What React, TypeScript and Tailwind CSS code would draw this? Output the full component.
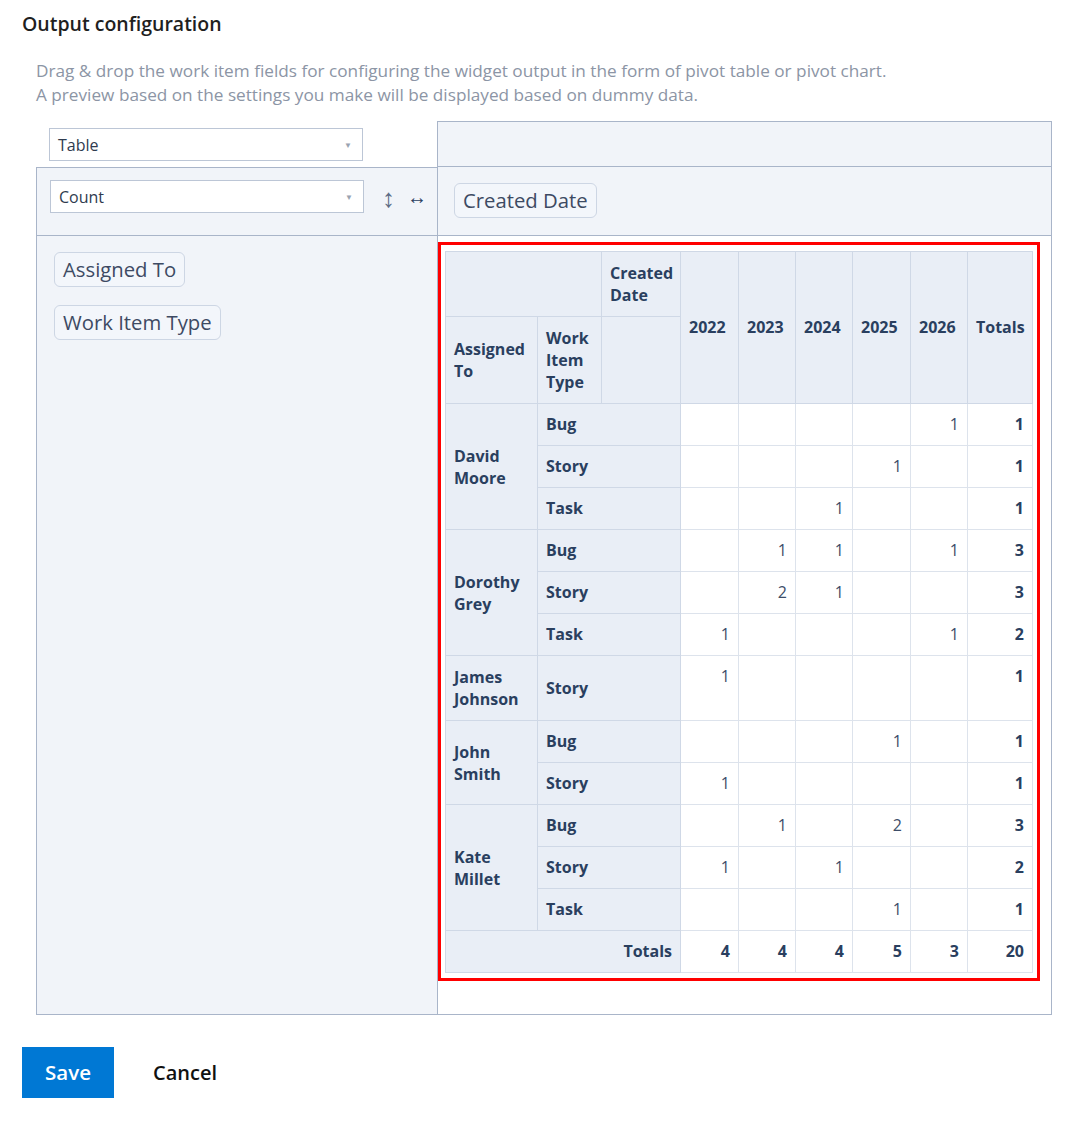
import React from "react";

const years = ["2022", "2023", "2024", "2025", "2026"];

type Row = { type: string; vals: (number | null)[]; total: number };
type Group = { name: string[]; rows: Row[] };

const groups: Group[] = [
  {
    name: ["David", "Moore"],
    rows: [
      { type: "Bug", vals: [null, null, null, null, 1], total: 1 },
      { type: "Story", vals: [null, null, null, 1, null], total: 1 },
      { type: "Task", vals: [null, null, 1, null, null], total: 1 },
    ],
  },
  {
    name: ["Dorothy", "Grey"],
    rows: [
      { type: "Bug", vals: [null, 1, 1, null, 1], total: 3 },
      { type: "Story", vals: [null, 2, 1, null, null], total: 3 },
      { type: "Task", vals: [1, null, null, null, 1], total: 2 },
    ],
  },
  {
    name: ["James", "Johnson"],
    rows: [{ type: "Story", vals: [1, null, null, null, null], total: 1 }],
  },
  {
    name: ["John", "Smith"],
    rows: [
      { type: "Bug", vals: [null, null, null, 1, null], total: 1 },
      { type: "Story", vals: [1, null, null, null, null], total: 1 },
    ],
  },
  {
    name: ["Kate", "Millet"],
    rows: [
      { type: "Bug", vals: [null, 1, null, 2, null], total: 3 },
      { type: "Story", vals: [1, null, 1, null, null], total: 2 },
      { type: "Task", vals: [null, null, null, 1, null], total: 1 },
    ],
  },
];

const colTotals = [4, 4, 4, 5, 3];

const th =
  "bg-[#e9eef6] border border-[#cfd8e6] px-[8px] py-[10px] font-bold text-left text-[#2a3f5f] leading-[21px]";
const td =
  "bg-white border border-[#dde3ec] px-[8px] py-[10px] text-right align-top text-[#3d4d68] leading-[21px]";

function Select({ label }: { label: string }) {
  return (
    <div className="w-[314px] h-[33px] bg-white border border-[#bcc6d6] flex items-center justify-between pl-[8px] pr-[10px]">
      <span className="text-[16px] text-[#2f3b4f]">{label}</span>
      <span className="text-[8px] text-[#9aa3b1]">▼</span>
    </div>
  );
}

function Pill({ label }: { label: string }) {
  return (
    <div className="inline-flex items-center h-[35px] px-[8px] border border-[#cdd6e4] rounded-[6px] bg-[#f3f6fb] text-[20.3px] text-[#3d4a63]">
      {label}
    </div>
  );
}

export default function App() {
  return (
    <div
      className="min-h-[1143px] bg-white w-[1072px]"
      style={{ fontFamily: '"Open Sans", "Noto Sans", sans-serif' }}
    >
      <div className="w-[1052px] bg-white pl-[22px] pt-[10px] pb-[46px]">
        <h2 className="text-[19.5px] leading-[28px] font-semibold text-[#1f1f1f]">
          Output configuration
        </h2>
        <div className="mt-[21px] pl-[14px] text-[17.2px] leading-[24px] text-[#8c95a5]">
          <p>
            Drag &amp; drop the work item fields for configuring the widget output in the form of pivot table or pivot chart.
          </p>
          <p>A preview based on the settings you make will be displayed based on dummy data.</p>
        </div>

        <div className="mt-[14px] ml-[14px] w-[1016px] grid grid-cols-[401px_615px] grid-rows-[46px_68px_auto]">
          {/* row 1 */}
          <div className="bg-white pl-[13px] pt-[7px]">
            <Select label="Table" />
          </div>
          <div className="bg-[#f1f4f9] border border-[#a9b5c9]" />
          {/* row 2 */}
          <div className="bg-[#f1f4f9] border-l border-t border-[#a9b5c9] pl-[13px] pt-[12px] flex items-start">
            <Select label="Count" />
            <div className="flex items-center h-[33px] ml-[18px] gap-[12px]">
              <span className="text-[26px] text-[#5d6c86] leading-none">↕</span>
              <span className="text-[20px] text-[#2a3f5f] leading-none">↔</span>
            </div>
          </div>
          <div className="bg-[#f1f4f9] border-l border-r border-[#a9b5c9] pl-[16px] pt-[16px]">
            <Pill label="Created Date" />
          </div>
          {/* row 3 */}
          <div className="bg-[#f1f4f9] border-l border-t border-b border-[#a9b5c9] pl-[17px] pt-[16px] flex flex-col items-start gap-[18px] min-h-[772px]">
            <Pill label="Assigned To" />
            <Pill label="Work Item Type" />
          </div>
          <div className="bg-white border border-[#a9b5c9] pt-[6px] pb-[27px]">
            <div className="inline-block border-[3px] border-[#ff0000] pl-[4px] pr-[4px] pt-[6px] pb-[5px]">
              <table className="border-collapse table-fixed w-[587px] text-[16px]">
                <colgroup>
                  <col className="w-[92px]" />
                  <col className="w-[64px]" />
                  <col className="w-[79px]" />
                  <col className="w-[58px]" />
                  <col className="w-[57px]" />
                  <col className="w-[57px]" />
                  <col className="w-[58px]" />
                  <col className="w-[57px]" />
                  <col className="w-[65px]" />
                </colgroup>
                <thead>
                  <tr>
                    <th className={th} colSpan={2}></th>
                    <th className={th + " !leading-[22px]"}>Created Date</th>
                    {years.map((y) => (
                      <th key={y} className={th} rowSpan={2}>
                        {y}
                      </th>
                    ))}
                    <th className={th} rowSpan={2}>
                      Totals
                    </th>
                  </tr>
                  <tr>
                    <th className={th + " !leading-[22px]"}>Assigned To</th>
                    <th className={th + " !leading-[22px]"}>Work Item Type</th>
                    <th className={th}></th>
                  </tr>
                </thead>
                <tbody>
                  {groups.map((g) =>
                    g.rows.map((r, i) => (
                      <tr key={g.name.join(" ") + r.type}>
                        {i === 0 && (
                          <th className={th + " !leading-[22px]"} rowSpan={g.rows.length}>
                            {g.name[0]}
                            <br />
                            {g.name[1]}
                          </th>
                        )}
                        <th className={th} colSpan={2}>
                          {r.type}
                        </th>
                        {r.vals.map((v, j) => (
                          <td key={j} className={td}>
                            {v ?? ""}
                          </td>
                        ))}
                        <td className={td + " font-bold !text-[#2a3f5f]"}>{r.total}</td>
                      </tr>
                    ))
                  )}
                  <tr>
                    <th className={th + " !text-right"} colSpan={3}>
                      Totals
                    </th>
                    {colTotals.map((t, j) => (
                      <td key={j} className={td + " font-bold !text-[#2a3f5f]"}>
                        {t}
                      </td>
                    ))}
                    <td className={td + " font-bold !text-[#2a3f5f]"}>20</td>
                  </tr>
                </tbody>
              </table>
            </div>
          </div>
        </div>

        <div className="mt-[32px] flex items-center">
          <button className="w-[92px] h-[51px] bg-[#0078d4] text-white text-[20.5px] font-semibold">
            Save
          </button>
          <button className="ml-[39px] text-[20px] font-semibold text-[#111]">Cancel</button>
        </div>
      </div>
    </div>
  );
}
